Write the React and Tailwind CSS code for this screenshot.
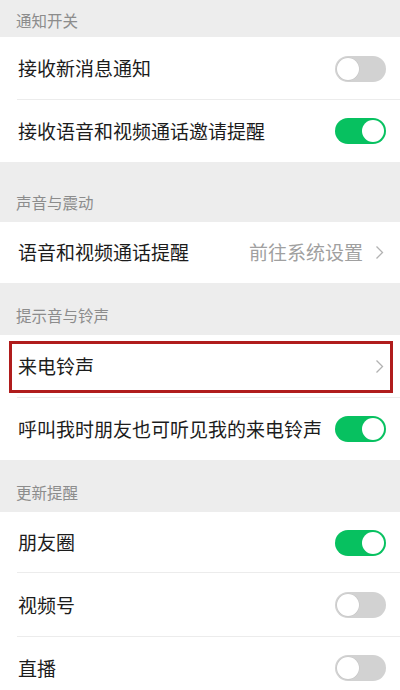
import React from "react";

const font = { fontFamily: '"Noto Sans CJK SC", "Noto Sans", sans-serif' };

function Toggle({ on }) {
  return on ? (
    <div className="w-[51px] h-[26px] rounded-full bg-[#07c160] flex items-center justify-end px-[2px] shrink-0">
      <div className="w-[22px] h-[22px] rounded-full bg-white" />
    </div>
  ) : (
    <div className="w-[51px] h-[26px] rounded-full bg-[#d2d2d2] flex items-center justify-start px-[2px] shrink-0">
      <div className="w-[22px] h-[22px] rounded-full bg-white shadow-[0_0_0_0.5px_#c4c4c4]" />
    </div>
  );
}

function Chevron() {
  return (
    <svg width="9" height="15" viewBox="0 0 9 15" className="shrink-0">
      <path d="M1.5 1.5 L7.5 7.5 L1.5 13.5" fill="none" stroke="#b2b2b2" strokeWidth="1.3" />
    </svg>
  );
}

function Header({ text, h, pb = "pb-[8px]" }) {
  return (
    <div className={`bg-[#ededed] flex items-end pl-[16px] text-[15.5px] text-[#8c8c8c] ${pb} ${h}`}>
      {text}
    </div>
  );
}

function Row({ label, right, divider, h = "h-[62px]", boxed }) {
  return (
    <div className={`relative bg-white ${h}`}>
      <div className="h-full flex items-center pl-[18px] pr-[14px]">
        <div className="flex-1 text-[19px] text-[#1c1c1c] whitespace-nowrap">{label}</div>
        {right}
      </div>
      {divider && <div className="absolute left-[17px] right-0 bottom-0 h-px bg-[#ececec]" />}
      {boxed && (
        <div className="absolute left-[9px] right-[7px] top-[6px] bottom-[5px] border-[3px] border-[#b01c1c]" />
      )}
    </div>
  );
}

export default function App() {
  return (
    <div className="w-[400px] h-[690px] overflow-hidden bg-[#ededed]" style={font}>
      <Header text="通知开关" h="h-[37px]" pb="pb-[5px]" />
      <Row label="接收新消息通知" right={<Toggle on={false} />} divider h="h-[63px]" />
      <Row label="接收语音和视频通话邀请提醒" right={<Toggle on />} h="h-[62px]" />
      <Header text="声音与震动" h="h-[60px]" />
      <Row
        label="语音和视频通话提醒"
        h="h-[61px]"
        right={
          <div className="flex items-center gap-[12px]">
            <span className="text-[19px] text-[#a0a0a0]">前往系统设置</span>
            <div className="pr-[2px]"><Chevron /></div>
          </div>
        }
      />
      <Header text="提示音与铃声" h="h-[52px]" />
      <Row label="来电铃声" h="h-[63px]" divider boxed right={<div className="pr-[2px]"><Chevron /></div>} />
      <Row label="呼叫我时朋友也可听见我的来电铃声" h="h-[62px]" right={<Toggle on />} />
      <Header text="更新提醒" h="h-[52px]" />
      <Row label="朋友圈" right={<Toggle on />} divider h="h-[61px]" />
      <Row label="视频号" right={<Toggle on={false} />} divider h="h-[64px]" />
      <Row label="直播" right={<Toggle on={false} />} h="h-[62px]" />
    </div>
  );
}
